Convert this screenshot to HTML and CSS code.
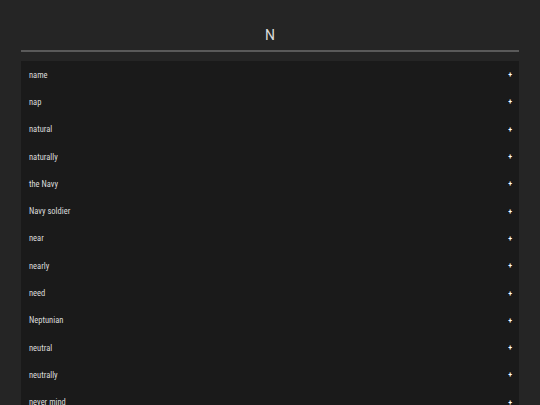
FILE: index.html
```html
<!DOCTYPE html>
<html lang="en">
<head>
  <meta charset="UTF-8" />
  <meta name="viewport" content="width=device-width, initial-scale=1.0"/>
  <title>N</title>
  <link rel="stylesheet" href="styles.css">
</head>
<body>

  <h1 class="letter">N</h1>

  <ul class="word-list">
    <li class="word"><span>name</span><span class="plus">+</span></li>
    <li class="word"><span>nap</span><span class="plus">+</span></li>
    <li class="word"><span>natural</span><span class="plus">+</span></li>
    <li class="word"><span>naturally</span><span class="plus">+</span></li>
    <li class="word"><span>the Navy</span><span class="plus">+</span></li>
    <li class="word"><span>Navy soldier</span><span class="plus">+</span></li>
    <li class="word"><span>near</span><span class="plus">+</span></li>
    <li class="word"><span>nearly</span><span class="plus">+</span></li>
    <li class="word"><span>need</span><span class="plus">+</span></li>
    <li class="word"><span>Neptunian</span><span class="plus">+</span></li>
    <li class="word"><span>neutral</span><span class="plus">+</span></li>
    <li class="word"><span>neutrally</span><span class="plus">+</span></li>
    <li class="word"><span>never mind</span><span class="plus">+</span></li>
  </ul>

</body>
</html>
```

FILE: styles.css
```css
body {
  font-family: Roboto, "Liberation Sans", sans-serif;
  background: #252525;
  color: #dcdcdc;
  margin: 0;
  padding: 0 21px;
}

.letter {
  margin: 0;
  padding-top: 27px;
  height: 23px;
  font-size: 14px;
  font-weight: 400;
  line-height: 16px;
  text-align: center;
  border-bottom: 2px solid #5a5a5a;
}

.word-list {
  list-style: none;
  margin: 9px 0 0 0;
  padding: 0;
  background: #1a1a1a;
}

.word {
  display: flex;
  justify-content: space-between;
  align-items: center;
  height: 27.3px;
  padding: 0 7px 0 8px;
  font-family: "Roboto Condensed", "Liberation Sans Narrow", Roboto, sans-serif;
  font-size: 8.5px;
}

.plus {
  color: #fff;
  font-weight: 700;
  font-size: 8px;
}
```
